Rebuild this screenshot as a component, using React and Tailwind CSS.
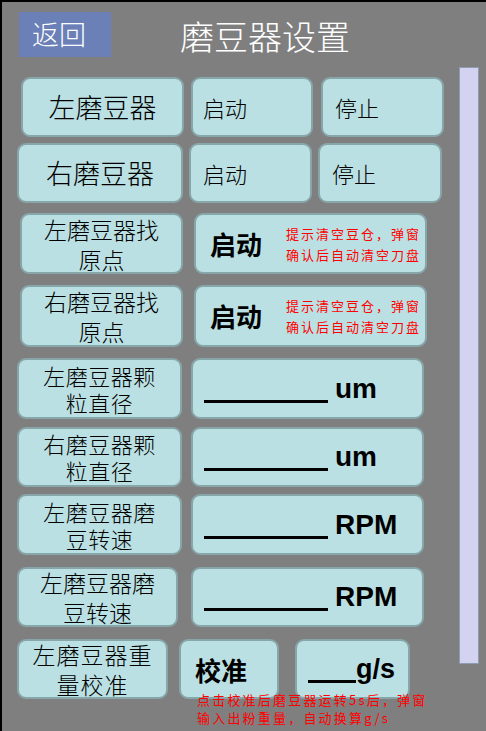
import React from "react";

const CJK = { fontFamily: '"Noto Sans CJK SC", "Noto Sans", sans-serif' };
const LAT = { fontFamily: '"Liberation Sans", Arial, "Noto Sans CJK SC", sans-serif' };

const btn = "border-2 border-[#87a6a9] bg-[#bbe0e3] rounded-[9px] shrink-0";

function Label({ w, l1, l2, lead = "leading-[30px]", size = "text-[23px]", track = "" }) {
  return (
    <div className={`${btn} ${w} h-full flex flex-col items-center justify-center ${size} font-light text-black ${lead} ${track}`} style={CJK}>
      <div>{l1}</div>
      <div>{l2}</div>
    </div>
  );
}

function Hint({ a, b }) {
  return (
    <div className="text-[13px] leading-[21px] tracking-[2px] text-[#ff0000]" style={CJK}>
      <div>{a}</div>
      <div>{b}</div>
    </div>
  );
}

function ValueBox({ unit }) {
  return (
    <div className={`${btn} w-[233px] h-full flex items-end pl-[11px] pb-[14px]`}>
      <div className="w-[124px] h-[3px] bg-black shrink-0" />
      <div className="ml-[7px] text-[28px] font-bold leading-none text-black" style={LAT}>{unit}</div>
    </div>
  );
}

export default function App() {
  return (
    <div className="w-[486px] h-[731px] overflow-hidden bg-[#7f7f7f] border-l-2 border-t-2 border-black flex flex-col">
      {/* header */}
      <div className="h-[65px] flex items-start shrink-0">
        <div className="ml-[17px] mt-[10px] w-[92px] h-[45px] bg-[#6a80b7] flex items-center pl-[13px] text-white text-[27px] font-light" style={CJK}>
          返回
        </div>
        <div className="ml-[69px] mt-[14px] text-white text-[34px] leading-[40px] font-light" style={CJK}>
          磨豆器设置
        </div>
      </div>

      {/* body */}
      <div className="flex flex-1">
        <div className="flex-1 flex flex-col pt-[10px]">
          {/* row 1 */}
          <div className="h-[60px] flex ml-[19px]">
            <div className={`${btn} w-[163px] h-full flex items-center justify-center text-[27px] font-light text-black`} style={CJK}>左磨豆器</div>
            <div className={`${btn} ml-[7px] w-[122px] h-full flex items-center pl-[10px] text-[22px] font-light text-black`} style={CJK}>启动</div>
            <div className={`${btn} ml-[8px] w-[123px] h-full flex items-center pl-[12px] text-[22px] font-light text-black`} style={CJK}>停止</div>
          </div>
          {/* row 2 */}
          <div className="h-[60px] flex ml-[15px] mt-[6px]">
            <div className={`${btn} w-[166px] h-full flex items-center justify-center text-[27px] font-light text-black`} style={CJK}>右磨豆器</div>
            <div className={`${btn} ml-[6px] w-[123px] h-full flex items-center pl-[12px] text-[22px] font-light text-black`} style={CJK}>启动</div>
            <div className={`${btn} ml-[6px] w-[124px] h-full flex items-center pl-[12px] text-[22px] font-light text-black`} style={CJK}>停止</div>
          </div>
          {/* row 3 */}
          <div className="h-[61px] flex ml-[18px] mt-[10px]">
            <Label w="w-[163px]" l1="左磨豆器找" l2="原点" />
            <div className={`${btn} ml-[11px] w-[233px] h-full flex items-center pl-[14px]`}>
              <div className="text-[26px] font-bold text-black leading-none" style={CJK}>启动</div>
              <div className="ml-[24px]">
                <Hint a="提示清空豆仓，弹窗" b="确认后自动清空刀盘" />
              </div>
            </div>
          </div>
          {/* row 4 */}
          <div className="h-[62px] flex ml-[18px] mt-[11px]">
            <Label w="w-[163px]" l1="右磨豆器找" l2="原点" />
            <div className={`${btn} ml-[11px] w-[233px] h-full flex items-center pl-[14px]`}>
              <div className="text-[26px] font-bold text-black leading-none" style={CJK}>启动</div>
              <div className="ml-[24px]">
                <Hint a="提示清空豆仓，弹窗" b="确认后自动清空刀盘" />
              </div>
            </div>
          </div>
          {/* row 5 */}
          <div className="h-[61px] flex ml-[15px] mt-[11px]">
            <Label w="w-[165px]" l1="左磨豆器颗" l2="粒直径" lead="leading-[27px]" size="text-[22px] tracking-[0.5px]" />
            <div className="ml-[9px] h-full"><ValueBox unit="um" /></div>
          </div>
          {/* row 6 */}
          <div className="h-[60px] flex ml-[15px] mt-[8px]">
            <Label w="w-[165px]" l1="右磨豆器颗" l2="粒直径" lead="leading-[27px]" size="text-[22px] tracking-[0.5px]" />
            <div className="ml-[9px] h-full"><ValueBox unit="um" /></div>
          </div>
          {/* row 7 */}
          <div className="h-[61px] flex ml-[15px] mt-[7px]">
            <Label w="w-[165px]" l1="左磨豆器磨" l2="豆转速" lead="leading-[27px]" size="text-[22px] tracking-[0.5px]" />
            <div className="ml-[9px] h-full"><ValueBox unit="RPM" /></div>
          </div>
          {/* row 8 */}
          <div className="h-[60px] flex ml-[15px] mt-[12px]">
            <Label w="w-[161px]" l1="左磨豆器磨" l2="豆转速" />
            <div className="ml-[13px] h-full"><ValueBox unit="RPM" /></div>
          </div>
          {/* row 9 */}
          <div className="h-[60px] flex ml-[15px] mt-[12px]">
            <Label w="w-[151px]" l1="左磨豆器重" l2="量校准" track="tracking-[1px]" />
            <div className={`${btn} ml-[11px] w-[100px] h-full flex items-center pl-[14px] text-[26px] font-bold text-black`} style={CJK}>校准</div>
            <div className={`${btn} ml-[16px] w-[115px] h-full flex items-end pl-[11px] pb-[14px]`}>
              <div className="w-[48px] h-[3px] bg-black shrink-0" />
              <div className="text-[27px] font-bold leading-none text-black" style={LAT}>g/s</div>
            </div>
          </div>
          {/* note */}
          <div className="ml-[195px] -mt-[8px] text-[13px] leading-[18px] tracking-[2.2px] text-[#ff0000]" style={CJK}>
            <div>点击校准后磨豆器运转5s后，弹窗</div>
            <div>输入出粉重量，自动换算g/s</div>
          </div>
        </div>

        {/* scrollbar */}
        <div className="w-[20px] h-[597px] mr-[7px] border border-[#8d9db0] bg-[#d3d3f1] shrink-0" />
      </div>
    </div>
  );
}
